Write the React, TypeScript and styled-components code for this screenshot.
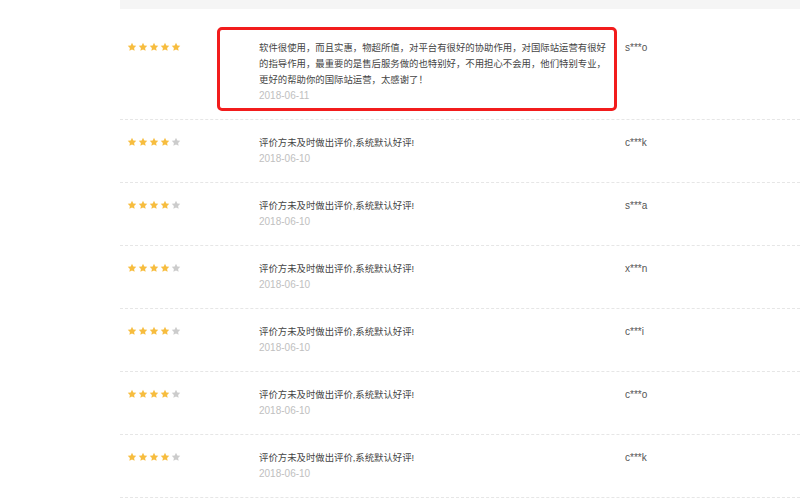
import styled, { createGlobalStyle } from "styled-components";

const GlobalStyle = createGlobalStyle`
  body {
    margin: 0;
    background: #fff;
    font-family: "Liberation Sans", "Noto Sans CJK SC", sans-serif;
  }
`;

interface Review {
  stars: number;
  text: string;
  date: string;
  user: string;
  marked?: boolean;
}

const reviews: Review[] = [
  {
    stars: 5,
    text:
      "软件很使用，而且实惠，物超所值，对平台有很好的协助作用，对国际站运营有很好的指导作用，最重要的是售后服务做的也特别好，不用担心不会用，他们特别专业，更好的帮助你的国际站运营，太感谢了！",
    date: "2018-06-11",
    user: "s***o",
    marked: true,
  },
  { stars: 4, text: "评价方未及时做出评价,系统默认好评!", date: "2018-06-10", user: "c***k" },
  { stars: 4, text: "评价方未及时做出评价,系统默认好评!", date: "2018-06-10", user: "s***a" },
  { stars: 4, text: "评价方未及时做出评价,系统默认好评!", date: "2018-06-10", user: "x***n" },
  { stars: 4, text: "评价方未及时做出评价,系统默认好评!", date: "2018-06-10", user: "c***i" },
  { stars: 4, text: "评价方未及时做出评价,系统默认好评!", date: "2018-06-10", user: "c***o" },
  { stars: 4, text: "评价方未及时做出评价,系统默认好评!", date: "2018-06-10", user: "c***k" },
];

const Star = ({ on }: { on: boolean }) => (
  <StarSvg viewBox="0 0 24 24">
    <path
      d="M12 1.8l3.1 6.5 7.1.9-5.2 4.9 1.3 7.1L12 17.8l-6.3 3.4L7 14.1 1.8 9.2l7.1-.9z"
      fill={on ? "#f7bd3f" : "#cccccc"}
    />
  </StarSvg>
);

export default function App() {
  return (
    <>
      <GlobalStyle />
      <Page>
        <TopBand />
        <List>
          {reviews.map((r, i) => (
            <Row key={i} first={i === 0}>
              <Stars>
                {[0, 1, 2, 3, 4].map((s) => (
                  <Star key={s} on={s < r.stars} />
                ))}
              </Stars>
              <Content>
                <Text>{r.text}</Text>
                <DateLine>{r.date}</DateLine>
              </Content>
              <User>{r.user}</User>
              {r.marked && <Highlight />}
            </Row>
          ))}
        </List>
      </Page>
    </>
  );
}

const Page = styled.div`
  padding-left: 120px;
  width: 680px;
`;

const TopBand = styled.div`
  height: 9px;
  background: #f5f5f5;
`;

const List = styled.div`
  display: flex;
  flex-direction: column;
`;

interface RowProps {
  first?: boolean;
}

const Row = styled.div<RowProps>`
  position: relative;
  display: flex;
  align-items: flex-start;
  padding: ${(p) => (p.first ? "31px 0 15px 7px" : "15px 0 15px 7px")};
  border-bottom: 1px dashed #e6e6e6;
`;

const Stars = styled.div`
  display: flex;
  gap: 1px;
  width: 132px;
  padding-top: 2px;
`;

const StarSvg = styled.svg`
  width: 10px;
  height: 10px;
  display: block;
`;

const Content = styled.div`
  width: 366px;
  display: flex;
  flex-direction: column;
`;

const Text = styled.div`
  max-width: 352px;
  font-size: 9.4px;
  line-height: 16px;
  color: #444;
`;

const DateLine = styled.div`
  font-size: 10px;
  line-height: 16px;
  color: #c0c0c0;
`;

const User = styled.div`
  font-size: 10px;
  line-height: 16px;
  color: #555;
`;

const Highlight = styled.div`
  position: absolute;
  left: 97px;
  top: 18px;
  width: 394px;
  height: 78px;
  border: 3px solid #f21c1c;
  border-radius: 5px;
  pointer-events: none;
`;
